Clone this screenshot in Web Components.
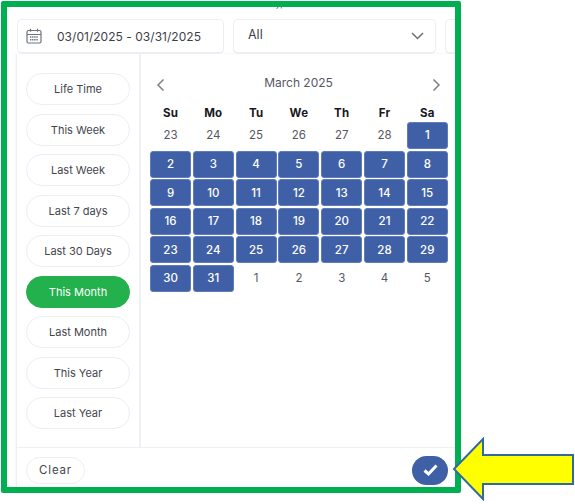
<!DOCTYPE html>
<html>
<head>
<meta charset="utf-8">
<title>Date range</title>
<style>
    html, body { margin: 0; padding: 0; background: #fff; }
    body { width: 575px; height: 504px; overflow: hidden; font-family: "Inter", "Liberation Sans", sans-serif; }
</style>
</head>
<body>
<report-screen></report-screen>

<script>
const presets = ['Life Time', 'This Week', 'Last Week', 'Last 7 days', 'Last 30 Days', 'This Month', 'Last Month', 'This Year', 'Last Year'];

class RangeInput extends HTMLElement {
    constructor() {
        super();
        this.attachShadow({ mode: 'open' });
    }

    connectedCallback() {
        this.shadowRoot.innerHTML = `
            <style>
                :host {
                    display: flex;
                    align-items: center;
                    box-sizing: border-box;
                    height: 35px;
                    padding: 0 0 0 8px;
                    gap: 15px;
                    background: #fff;
                    border: 1px solid #eceef4;
                    border-bottom-width: 2px;
                    border-radius: 5px;
                    color: #3d3f47;
                    font-size: 12px;
                    letter-spacing: 0.03px;
                    white-space: nowrap;
                }
                svg { display: block; flex: none; }
            </style>
            <svg width="16" height="16" viewBox="0 0 16 16" fill="none" stroke="#6b7280" stroke-width="1.2">
                <rect x="1" y="2.5" width="14" height="12.5" rx="1.5"/>
                <path d="M1 6.5h14M4.5 .8v3M11.5 .8v3"/>
                <path d="M4 9h8M4 11.8h8" stroke-width="1.6" stroke-dasharray="1.4 .7"/>
            </svg>
            <slot></slot>
        `;
    }
}

class SelectBox extends HTMLElement {
    constructor() {
        super();
        this.attachShadow({ mode: 'open' });
    }

    connectedCallback() {
        this.shadowRoot.innerHTML = `
            <style>
                :host {
                    display: flex;
                    align-items: center;
                    justify-content: space-between;
                    box-sizing: border-box;
                    height: 35px;
                    padding: 0 11px 3px 14px;
                    background: #fff;
                    border: 1px solid #eceef4;
                    border-bottom-width: 2px;
                    border-radius: 5px;
                    color: #3d3f47;
                    font-size: 12.5px;
                }
                svg { display: block; margin-top: 3px; }
            </style>
            <slot></slot>
            <svg width="13" height="8" viewBox="0 0 13 8" fill="none" stroke="#6b6f78" stroke-width="1.5">
                <path d="M1 1l5.5 5.5L12 1"/>
            </svg>
        `;
    }
}

class PresetList extends HTMLElement {
    constructor() {
        super();
        this.attachShadow({ mode: 'open' });
    }

    connectedCallback() {
        const active = this.getAttribute('active');
        const items = presets.map(p => `<button class="${p === active ? 'on' : ''}">${p}</button>`).join('');
        this.shadowRoot.innerHTML = `
            <style>
                :host {
                    display: flex;
                    flex-direction: column;
                    gap: 8.5px;
                    box-sizing: border-box;
                    width: 124px;
                    padding: 19px 9px 0;
                    border-right: 2px solid #eef0f6;
                }
                button {
                    height: 32px;
                    padding: 0;
                    background: #fff;
                    border: 1px solid #eceef4;
                    border-radius: 16px;
                    color: #44464e;
                    font: inherit;
                    font-size: 11px;
                }
                .on {
                    background: #22b14c;
                    border-color: #22b14c;
                    color: #fff;
                }
            </style>
            ${items}
        `;
    }
}

class MonthCalendar extends HTMLElement {
    constructor() {
        super();
        this.attachShadow({ mode: 'open' });
    }

    connectedCallback() {
        const names = ['Su', 'Mo', 'Tu', 'We', 'Th', 'Fr', 'Sa'];
        let cells = names.map(n => `<div class="dow">${n}</div>`).join('');
        [23, 24, 25, 26, 27, 28].forEach(d => { cells += `<div class="day">${d}</div>`; });
        for (let d = 1; d <= 31; d++) cells += `<div class="day sel">${d}</div>`;
        [1, 2, 3, 4, 5].forEach(d => { cells += `<div class="day">${d}</div>`; });

        this.shadowRoot.innerHTML = `
            <style>
                :host {
                    display: block;
                    box-sizing: border-box;
                    padding: 20px 0 0 9px;
                    flex: 1;
                }
                .head {
                    display: flex;
                    align-items: center;
                    justify-content: space-between;
                    width: 298px;
                    height: 22px;
                    padding: 0 7px 0 6px;
                    box-sizing: border-box;
                    color: #55575f;
                    font-size: 12px;
                }
                .head span { margin-top: -6px; }
                .grid {
                    display: grid;
                    grid-template-columns: repeat(7, 41px);
                    grid-template-rows: 20px;
                    grid-auto-rows: 27px;
                    column-gap: 1.8px;
                    row-gap: 1.6px;
                    margin-top: 4.4px;
                    width: 298px;
                    font-size: 11.5px;
                }
                .grid > div { display: flex; align-items: center; justify-content: center; }
                .dow { padding-top: 5px; color: #17181c; font-weight: 700; letter-spacing: .2px; }
                .day { color: #55575f; }
                .sel {
                    background: #3f60a6;
                    border: 1px solid #5f7cb8;
                    box-sizing: border-box;
                    border-radius: 3px;
                    color: #fff;
                    font-weight: 500;
                }
            </style>
            <div class="head">
                <svg width="9" height="14" viewBox="0 0 9 14" fill="none" stroke="#7d8087" stroke-width="1.5"><path d="M7.5 1.5L2 7l5.5 5.5"/></svg>
                <span>March 2025</span>
                <svg width="9" height="14" viewBox="0 0 9 14" fill="none" stroke="#7d8087" stroke-width="1.5"><path d="M1.5 1.5L7 7l-5.5 5.5"/></svg>
            </div>
            <div class="grid">${cells}</div>
        `;
    }
}

class PanelFooter extends HTMLElement {
    constructor() {
        super();
        this.attachShadow({ mode: 'open' });
    }

    connectedCallback() {
        this.shadowRoot.innerHTML = `
            <style>
                :host {
                    display: flex;
                    align-items: center;
                    justify-content: space-between;
                    box-sizing: border-box;
                    height: 40px;
                    padding: 9px 7px 4px 9px;
                    border-top: 1px solid #eef0f6;
                }
                .clear {
                    width: 59px;
                    height: 27px;
                    padding: 0;
                    background: #fff;
                    border: 1px solid #eceef4;
                    border-radius: 14px;
                    color: #44464e;
                    font: inherit;
                    font-size: 11.5px;
                    letter-spacing: 0.8px;
                }
                .ok {
                    display: flex;
                    align-items: center;
                    justify-content: center;
                    width: 36px;
                    height: 29px;
                    padding: 0;
                    background: #3f60a6;
                    border: 0;
                    border-radius: 15px;
                }
            </style>
            <button class="clear">Clear</button>
            <button class="ok">
                <svg width="15" height="12" viewBox="0 0 15 12" fill="none" stroke="#fff" stroke-width="3"><path d="M1.5 6.5l4 3.5 8-8.5"/></svg>
            </button>
        `;
    }
}

class ReportScreen extends HTMLElement {
    constructor() {
        super();
        this.attachShadow({ mode: 'open' });
    }

    connectedCallback() {
        this.shadowRoot.innerHTML = `
            <style>
                :host {
                    display: block;
                    position: relative;
                    width: 575px;
                    height: 504px;
                    overflow: hidden;
                }
                .page {
                    box-sizing: border-box;
                    width: 455px;
                    height: 488px;
                    padding: 0 0 0 17px;
                    overflow: hidden;
                }
                .label {
                    height: 19px;
                    margin-left: 254px;
                    color: #3d3f47;
                    font-size: 8px;
                    line-height: 9px;
                }
                .filters {
                    display: grid;
                    grid-template-columns: 207px 203px 60px;
                    column-gap: 9px;
                }
                .panel {
                    width: 438px;
                    height: 433px;
                    box-shadow: -1px 0 2px #e6e8f0;
                }
                .body { display: flex; height: 393px; }
                .frame {
                    position: absolute;
                    left: 1px;
                    top: 1px;
                    width: 460px;
                    height: 492px;
                    box-sizing: border-box;
                    border: 6px solid #00b050;
                    border-radius: 2px;
                }
                .arrow { position: absolute; left: 452px; top: 437px; }
            </style>
            <div class="page">
                <div class="label">Type</div>
                <div class="filters">
                    <range-input>03/01/2025 - 03/31/2025</range-input>
                    <select-box>All</select-box>
                    <select-box></select-box>
                </div>
                <div class="panel">
                    <div class="body">
                        <preset-list active="This Month"></preset-list>
                        <month-calendar></month-calendar>
                    </div>
                    <panel-footer></panel-footer>
                </div>
            </div>
            <div class="frame"></div>
            <svg class="arrow" width="123" height="64" viewBox="0 0 123 64">
                <path d="M2 32L31 2v16h90v29H31v15z" fill="#ffff00" stroke="#2e6aa6" stroke-width="2"/>
            </svg>
        `;
    }
}

customElements.define('range-input', RangeInput);
customElements.define('select-box', SelectBox);
customElements.define('preset-list', PresetList);
customElements.define('month-calendar', MonthCalendar);
customElements.define('panel-footer', PanelFooter);
customElements.define('report-screen', ReportScreen);
</script>
</body>
</html>
